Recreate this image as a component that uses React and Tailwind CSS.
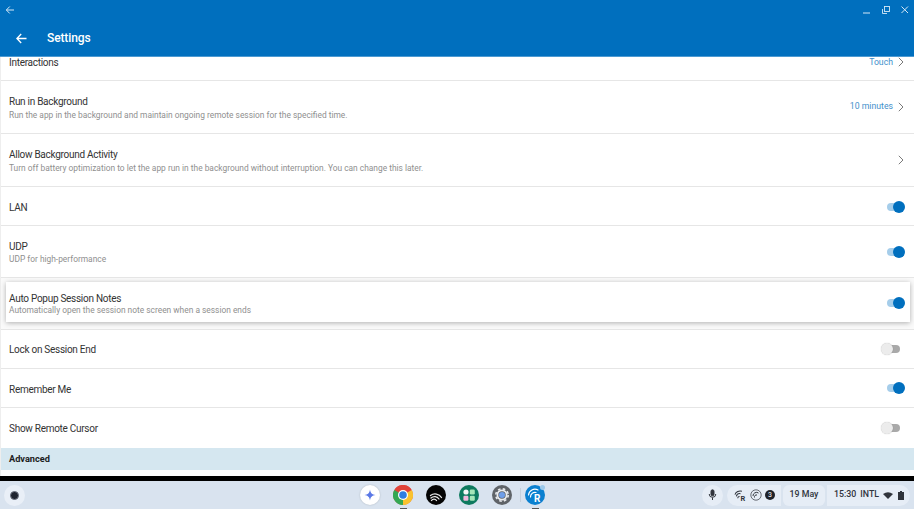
import React from "react";

function Chevron() {
  return (
    <svg width="6" height="10" viewBox="0 0 6 10" className="shrink-0" fill="none" stroke="#7a7a7a" strokeWidth="1">
      <path d="M0.8 0.8 L5 5 L0.8 9.2" />
    </svg>
  );
}

function Toggle({ on, low }) {
  if (on) {
    return (
      <div className={`relative w-[18px] h-[12px] flex items-center ${low ? "mt-[1px]" : ""}`}>
        <div className="w-[15px] h-[8px] rounded-full bg-[#a5cdea]" />
        <div className="absolute right-0 top-0 w-[12px] h-[12px] rounded-full bg-[#006fbe]" />
      </div>
    );
  }
  return (
    <div className="relative w-[19px] h-[12px] mr-[5px] flex items-center">
      <div className="w-[15px] ml-[4px] h-[8px] rounded-full bg-[#a9a9a9]" />
      <div className="absolute left-0 top-0 w-[12px] h-[12px] rounded-full bg-[#ececec] shadow-[0_0_1px_rgba(0,0,0,0.3)]" />
    </div>
  );
}

function Row({ title, desc, right, h, border = true, offset = "pt-[1px]", descGap = "mt-0" }) {
  return (
    <div className={`flex items-center justify-between pl-[8px] pr-[9px] shrink-0 ${h} ${border ? "border-b border-[#e6e6e6]" : ""}`}>
      <div className={offset}>
        <div className="text-[10px] tracking-[-0.28px] leading-[14px] text-[#333333]">{title}</div>
        {desc && <div className={`text-[8.4px] leading-[12px] text-[#8f8f8f] ${descGap}`}>{desc}</div>}
      </div>
      {right}
    </div>
  );
}

function ValueChevron({ value }) {
  return (
    <div className="flex items-center gap-[5px] mr-[1px]">
      <span className="text-[8.7px] text-[#3f8fcb]">{value}</span>
      <Chevron />
    </div>
  );
}

function ShelfApp({ children, dot }) {
  return (
    <div className="relative w-[20px] h-[20px] flex items-center justify-center">
      {children}
      {dot && <div className="absolute bottom-[-4px] left-[7px] w-[7px] h-[1px] bg-[#555]" />}
    </div>
  );
}

export default function App() {
  return (
    <div className="w-[914px] h-[509px] overflow-hidden flex flex-col bg-white font-['Roboto',sans-serif]">
      <header className="h-[57px] shrink-0 bg-[#006fbe] border-b border-[#4c9ad2] flex flex-col text-white">
        <div className="h-[20px] flex items-center justify-between pl-[5px] pr-[4px]">
          <svg width="10" height="10" viewBox="0 0 10 10" fill="none" stroke="#d5e8f6" strokeWidth="1">
            <path d="M9 5 H1.5 M4.8 1.5 L1.3 5 L4.8 8.5" />
          </svg>
          <div className="flex items-center gap-[9px]">
            <svg width="10" height="10" viewBox="0 0 10 10" stroke="#d5e8f6" strokeWidth="1" fill="none"><path d="M1 8 H8" /></svg>
            <svg width="10" height="10" viewBox="0 0 10 10" stroke="#d5e8f6" strokeWidth="0.9" fill="none"><rect x="3.5" y="1.5" width="5" height="5" /><path d="M1.5 4 V8.5 H6" /></svg>
            <svg width="10" height="10" viewBox="0 0 10 10" stroke="#d5e8f6" strokeWidth="1" fill="none"><path d="M1.5 1.5 L8 8 M8 1.5 L1.5 8" /></svg>
          </div>
        </div>
        <div className="flex-1 flex items-center pl-[16px]">
          <svg width="11" height="11" viewBox="0 0 11 11" fill="none" stroke="white" strokeWidth="1.3">
            <path d="M10.5 5.5 H1 M5.2 1 L0.9 5.5 L5.2 10" />
          </svg>
          <span className="ml-[20px] text-[12px] tracking-[-0.12px] font-medium">Settings</span>
        </div>
      </header>

      <main className="flex-1 min-h-0 flex flex-col border-l border-[#eeeeee]">
        <div className="h-[24px] shrink-0 flex items-start justify-between pl-[8px] pr-[9px] border-b border-[#e6e6e6]">
          <div className="text-[10px] tracking-[-0.28px] leading-[11px] text-[#333333]">Interactions</div>
          <div className="flex items-start gap-[5px] mr-[1px]"><span className="text-[8.7px] leading-[11px] text-[#3f8fcb]">Touch</span><Chevron /></div>
        </div>
        <Row h="h-[53px]" offset="pt-[1px]" title="Run in Background" desc="Run the app in the background and maintain ongoing remote session for the specified time." right={<ValueChevron value="10 minutes" />} />
        <Row h="h-[53px]" offset="pt-[1px]" title="Allow Background Activity" desc="Turn off battery optimization to let the app run in the background without interruption. You can change this later." right={<div className="mr-[1px]"><Chevron /></div>} />
        <Row h="h-[39px]" offset="pt-[3px]" title="LAN" right={<Toggle on low />} />
        <Row h="h-[52px]" offset="pt-[2px]" descGap="-mt-[1px]" title="UDP" desc="UDP for high-performance" right={<Toggle on />} />
        <div className="h-[52px] shrink-0 bg-[#fafafa] border-b border-[#e6e6e6] pt-[4px] pb-[7px] pl-[5px] pr-[4px]">
          <div className="h-full bg-white shadow-[0_1px_5px_rgba(0,0,0,0.3)] flex items-center justify-between pl-[3px] pr-[5px]">
            <div className="pt-[3px]">
              <div className="text-[10px] tracking-[-0.28px] leading-[14px] text-[#333333]">Auto Popup Session Notes</div>
              <div className="text-[8.4px] leading-[12px] -mt-[2px] text-[#8f8f8f]">Automatically open the session note screen when a session ends</div>
            </div>
            <Toggle on low />
          </div>
        </div>
        <Row h="h-[39px]" title="Lock on Session End" right={<Toggle />} />
        <Row h="h-[39px]" offset="pt-[3px]" title="Remember Me" right={<Toggle on />} />
        <Row h="h-[40px]" border={false} title="Show Remote Cursor" right={<Toggle />} />
        <div className="h-[22px] shrink-0 bg-[#d5e7f0] flex items-center pl-[8px] text-[9.2px] font-bold text-[#1c1c1c]">Advanced</div>
        <div className="flex-1" />
      </main>

      <div className="h-[5px] shrink-0 bg-black" />

      <footer className="h-[28px] shrink-0 bg-[#d9e3ef] relative flex items-center justify-between pl-[4px] pr-[4px]">
        <div className="w-[21px] h-[21px] rounded-full bg-[#e9eff7] flex items-center justify-center">
          <div className="w-[9px] h-[9px] rounded-full bg-[#1f2430] border border-[#6c7280]" />
        </div>

        <div className="absolute left-[360px] top-[4px] flex items-center gap-[13px]">
          <ShelfApp>
            <div className="w-[20px] h-[20px] rounded-full bg-white shadow-[0_0_2px_rgba(0,0,0,0.2)] flex items-center justify-center">
              <svg width="12" height="12" viewBox="0 0 12 12"><path d="M6 0.5 C6.5 4 8 5.5 11.5 6 C8 6.5 6.5 8 6 11.5 C5.5 8 4 6.5 0.5 6 C4 5.5 5.5 4 6 0.5Z" fill="#5a78e6" /></svg>
            </div>
          </ShelfApp>
          <ShelfApp dot>
            <svg width="20" height="20" viewBox="0 0 20 20">
              <circle cx="10" cy="10" r="10" fill="#e0433a" />
              <path d="M10 10 L1.3 5 A10 10 0 0 0 10 20Z" fill="#34a853" />
              <path d="M10 10 L10 20 A10 10 0 0 0 18.7 5Z" fill="#f9c22e" />
              <path d="M1.3 5 A10 10 0 0 1 18.7 5 H10Z" fill="#e0433a" />
              <circle cx="10" cy="10" r="5" fill="white" />
              <circle cx="10" cy="10" r="3.8" fill="#2f7de1" />
            </svg>
          </ShelfApp>
          <ShelfApp>
            <svg width="20" height="20" viewBox="0 0 20 20" fill="none">
              <circle cx="10" cy="10" r="10" fill="#050505" />
              <g stroke="#e8e8e8" strokeWidth="1.3" strokeLinecap="round">
                <path d="M4.5 10.5 A7.5 7.5 0 0 1 15.5 12.5" />
                <path d="M5 13 A5.3 5.3 0 0 1 13 14" />
                <path d="M5.5 15.5 A3 3 0 0 1 10.5 15.5" />
              </g>
            </svg>
          </ShelfApp>
          <ShelfApp>
            <svg width="20" height="20" viewBox="0 0 20 20">
              <circle cx="10" cy="10" r="10" fill="#0e7a5f" />
              <circle cx="7" cy="7" r="2.6" fill="#f6f6f6" />
              <rect x="10.8" y="4.5" width="5" height="5" rx="1.2" fill="#a5e6b8" />
              <rect x="4.4" y="10.8" width="5" height="5" rx="1.2" fill="#f2b8dc" />
              <rect x="10.8" y="10.8" width="5" height="5" rx="1.2" fill="#a5e6b8" />
            </svg>
          </ShelfApp>
          <ShelfApp>
            <svg width="20" height="20" viewBox="0 0 20 20" fill="none">
              <circle cx="10" cy="10" r="10" fill="#5f6368" />
              <circle cx="10" cy="10" r="6.2" stroke="#e8eaed" strokeWidth="1.6" strokeDasharray="2.6 2.27" />
              <circle cx="10" cy="10" r="4.6" stroke="#e8eaed" strokeWidth="1.8" />
              <circle cx="10" cy="10" r="3" fill="#6f9ee8" />
            </svg>
          </ShelfApp>
          <ShelfApp dot>
            <div className="absolute left-[-5px] top-[3px] w-px h-[14px] bg-[#c5d0dc]" />
            <svg width="20" height="20" viewBox="0 0 20 20" fill="none">
              <circle cx="10" cy="10" r="10" fill="#0a80d0" />
              <circle cx="17.5" cy="2.5" r="2.5" fill="#9cc9ea" />
              <g stroke="white" strokeWidth="1.2" strokeLinecap="round">
                <path d="M3.5 10 A6.5 6.5 0 0 1 13 5" />
                <path d="M5.5 12 A4.5 4.5 0 0 1 11 7.5" />
              </g>
              <text x="9" y="16.5" fontSize="10" fontWeight="700" fill="white" fontFamily="Roboto, sans-serif">R</text>
            </svg>
          </ShelfApp>
        </div>

        <div className="flex items-center gap-[2px] text-[#30343c]">
          <div className="w-[21px] h-[21px] rounded-full bg-[#e6edf6] flex items-center justify-center mr-[2px]">
            <svg width="11" height="12" viewBox="0 0 11 12" fill="none" stroke="#30343c" strokeWidth="1">
              <rect x="4" y="0.8" width="3" height="6" rx="1.5" fill="#30343c" />
              <path d="M2.2 5 A3.3 3.3 0 0 0 8.8 5 M5.5 8.5 V11" />
            </svg>
          </div>
          <div className="h-[21px] w-[54px] rounded-l-full rounded-r-[6px] bg-[#e6edf6] flex items-center justify-center gap-[3px] pl-[1px]">
            <svg width="13" height="13" viewBox="0 0 14 14" fill="none" stroke="#30343c" strokeWidth="1.1">
              <path d="M1 6 A6 6 0 0 1 8.5 2.5 M2.5 8 A4 4 0 0 1 7 5 M4 10 A2 2 0 0 1 6 8" />
              <text x="7" y="12.8" fontSize="8" fontWeight="700" fill="#30343c" stroke="none" fontFamily="Roboto, sans-serif">R</text>
            </svg>
            <svg width="12" height="12" viewBox="0 0 12 12" fill="none" stroke="#30343c" strokeWidth="1">
              <circle cx="6" cy="6" r="5.2" strokeWidth="0.7" />
              <path d="M3 7 A3.5 3.5 0 0 1 8.5 4 M4.5 8.5 A2 2 0 0 1 7 6" />
            </svg>
            <div className="w-[10px] h-[10px] rounded-full bg-[#1f2229] text-white text-[7px] leading-[10px] text-center">3</div>
          </div>
          <div className="h-[21px] w-[42px] rounded-[6px] bg-[#e6edf6] flex items-center justify-center text-[8.8px] font-medium">19 May</div>
          <div className="h-[21px] w-[83px] rounded-r-full rounded-l-[6px] bg-[#e6edf6] flex items-center gap-[4px] pl-[7px] text-[8.8px] font-medium">
            <span>15:30</span>
            <span>INTL</span>
            <svg width="10" height="7" viewBox="0 0 10 7"><path d="M0 2 Q5 -1.5 10 2 L5 7Z" fill="#30343c" /></svg>
            <svg width="6" height="9" viewBox="0 0 6 9" className="ml-[1px]"><path d="M2 0 H4 V1 H6 V9 H0 V1 H2Z" fill="#30343c" /></svg>
          </div>
        </div>
      </footer>
    </div>
  );
}
